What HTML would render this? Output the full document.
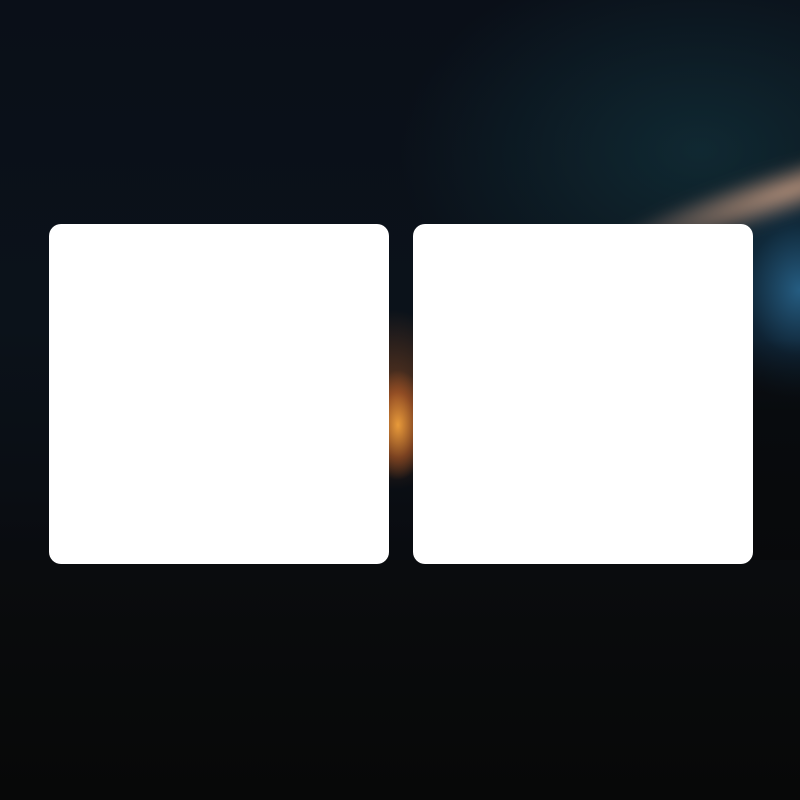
<!DOCTYPE html>
<html><head><meta charset="utf-8"><style>
html,body{margin:0;padding:0}
body{width:800px;height:800px;position:relative;overflow:hidden;background:#0a0f17;}
.bg{position:absolute;inset:0;
background:
radial-gradient(ellipse 30px 55px at 398px 425px, rgba(240,160,60,0.95), rgba(200,100,40,0.5) 60%, rgba(0,0,0,0) 100%),
radial-gradient(ellipse 60px 90px at 395px 400px, rgba(170,90,40,0.55), rgba(0,0,0,0) 100%),
radial-gradient(ellipse 90px 110px at 800px 290px, rgba(40,100,140,0.9), rgba(20,60,90,0.4) 60%, rgba(0,0,0,0) 100%),
radial-gradient(ellipse 300px 200px at 700px 150px, rgba(20,60,70,0.55), rgba(0,0,0,0) 100%),
linear-gradient(180deg, #0a0f18 0%, #0b121a 40%, #0a0e14 60%, #08090b 80%, #070809 100%);}
.streak{position:absolute;left:600px;top:175px;width:320px;height:50px;border-radius:50%;
transform:rotate(-18deg);transform-origin:center;
background:radial-gradient(ellipse at 60% 50%, rgba(220,170,140,0.8), rgba(150,120,110,0.3) 55%, rgba(0,0,0,0) 75%);filter:blur(6px);}
.treesR{position:absolute;left:750px;top:340px;width:60px;height:240px;background:linear-gradient(180deg,rgba(8,10,12,0) 0%,rgba(8,10,12,0.8) 30%,#08090b 100%);}
.trees{position:absolute;left:0;right:0;top:560px;bottom:0;background:linear-gradient(180deg,#0a0c0e,#070808);}
.card{position:absolute;top:224px;width:340px;height:340px;background:#fff;border-radius:12px;}
</style></head><body>
<div class="bg"></div>
<div class="streak"></div>
<div class="treesR"></div>
<div class="trees"></div>
<div class="card" style="left:49px"></div>
<div class="card" style="left:413px"></div>
</body></html>
